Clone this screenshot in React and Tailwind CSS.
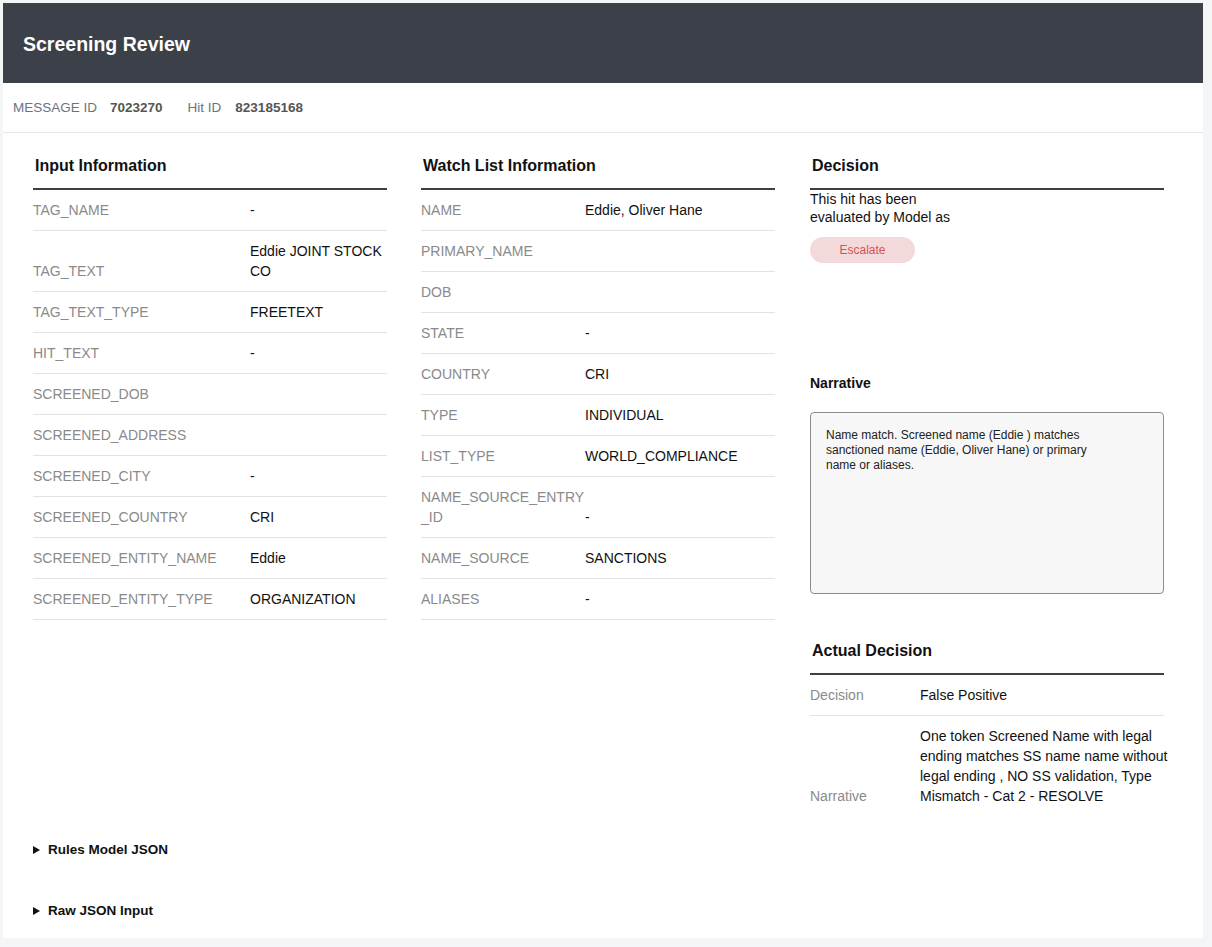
import React from 'react';

const inputRows = [
    ['TAG_NAME', '-'],
    ['TAG_TEXT', 'Eddie JOINT STOCK CO'],
    ['TAG_TEXT_TYPE', 'FREETEXT'],
    ['HIT_TEXT', '-'],
    ['SCREENED_DOB', ''],
    ['SCREENED_ADDRESS', ''],
    ['SCREENED_CITY', '-'],
    ['SCREENED_COUNTRY', 'CRI'],
    ['SCREENED_ENTITY_NAME', 'Eddie'],
    ['SCREENED_ENTITY_TYPE', 'ORGANIZATION'],
];

const watchRows = [
    ['NAME', 'Eddie, Oliver Hane'],
    ['PRIMARY_NAME', ''],
    ['DOB', ''],
    ['STATE', '-'],
    ['COUNTRY', 'CRI'],
    ['TYPE', 'INDIVIDUAL'],
    ['LIST_TYPE', 'WORLD_COMPLIANCE'],
    ['NAME_SOURCE_ENTRY\u200B_ID', '-'],
    ['NAME_SOURCE', 'SANCTIONS'],
    ['ALIASES', '-'],
];

const actualRows = [
    ['Decision', 'False Positive'],
    ['Narrative', 'One token Screened Name with legal ending matches SS name name without legal ending , NO SS validation, Type Mismatch - Cat 2 - RESOLVE'],
];

const SectionTitle = ({ children }) => (
    <div className="border-b-2 border-[#3b3f46] px-[2px] pb-[11px]">
        <h2 className="text-[16px] font-bold leading-[22px] text-[#111]">{children}</h2>
    </div>
);

const InfoTable = ({ rows, labelWidth, lastBorder = true, valueClass = '' }) => (
    <div>
        {rows.map(([label, value], i) => (
            <div
                key={label}
                className={`flex items-end py-[10px] text-[14px] leading-[20px] ${
                    lastBorder || i < rows.length - 1 ? 'border-b border-[#e3e3e3]' : ''
                }`}
            >
                <div className="shrink-0 text-[#8a8a8a]" style={{ width: labelWidth }}>
                    {label}
                </div>
                <div className={`min-w-0 flex-1 text-[#111] ${valueClass}`}>{value}</div>
            </div>
        ))}
    </div>
);

const Disclosure = ({ label }) => (
    <details>
        <summary className="flex cursor-pointer list-none items-center gap-[8px] text-[13.5px] font-bold leading-[16px] text-[#111] [&::-webkit-details-marker]:hidden">
            <svg width="7" height="8" viewBox="0 0 7 8" className="shrink-0">
                <path d="M0 0 L7 4 L0 8 Z" fill="#111" />
            </svg>
            {label}
        </summary>
    </details>
);

export default function App() {
    return (
        <div className="min-h-screen bg-[#f4f5f7] p-[3px] font-['Liberation_Sans',Arial,sans-serif]">
            <div className="w-[1200px] bg-white pb-[19px]">
                <header className="flex h-[80px] items-center bg-[#3b4049] px-[20px] pt-[2px]">
                    <h1 className="text-[19.5px] font-bold leading-[24px] text-white">Screening Review</h1>
                </header>

                <div className="flex h-[50px] items-center border-b border-[#e5e7eb] px-[10px] pt-[2px] text-[13.5px] text-[#6b7280]">
                    <span>MESSAGE ID</span>
                    <span className="ml-[13px] font-bold text-[#555]">7023270</span>
                    <span className="ml-[25px]">Hit ID</span>
                    <span className="ml-[14px] font-bold text-[#555]">823185168</span>
                </div>

                <div className="px-[30px] pt-[22px]">
                    <div className="flex items-start gap-[34px]">
                        <section className="w-[354px]">
                            <SectionTitle>Input Information</SectionTitle>
                            <InfoTable rows={inputRows} labelWidth={217} />
                        </section>

                        <section className="w-[354px]">
                            <SectionTitle>Watch List Information</SectionTitle>
                            <InfoTable rows={watchRows} labelWidth={164} />
                        </section>

                        <section className="ml-[1px] w-[354px]">
                            <SectionTitle>Decision</SectionTitle>
                            <p className="w-[145px] text-[14px] leading-[18px] text-[#111]">
                                This hit has been evaluated by Model as
                            </p>
                            <div className="mt-[11px] flex h-[26px] w-[105px] items-center justify-center rounded-full bg-[#f4d9da] text-[12px] text-[#d45454]">
                                Escalate
                            </div>

                            <h3 className="mt-[112px] text-[14px] font-bold leading-[16px] text-[#111]">Narrative</h3>
                            <div className="mt-[21px] h-[182px] rounded-[4px] border border-[#8c8c8c] bg-[#f7f7f7] pb-[14px] pl-[15px] pr-[44px] pt-[15px] text-[12px] leading-[15px] text-[#222]">
                                Name match. Screened name (Eddie ) matches sanctioned name (Eddie, Oliver Hane) or primary name or aliases.
                            </div>

                            <div className="mt-[46px]">
                                <SectionTitle>Actual Decision</SectionTitle>
                                <InfoTable rows={actualRows} labelWidth={110} lastBorder={false} valueClass="mr-[-10px]" />
                            </div>
                        </section>
                    </div>

                    <div className="mt-[26px] flex flex-col gap-[45px]">
                        <Disclosure label="Rules Model JSON" />
                        <Disclosure label="Raw JSON Input" />
                    </div>
                </div>
            </div>
        </div>
    );
}
